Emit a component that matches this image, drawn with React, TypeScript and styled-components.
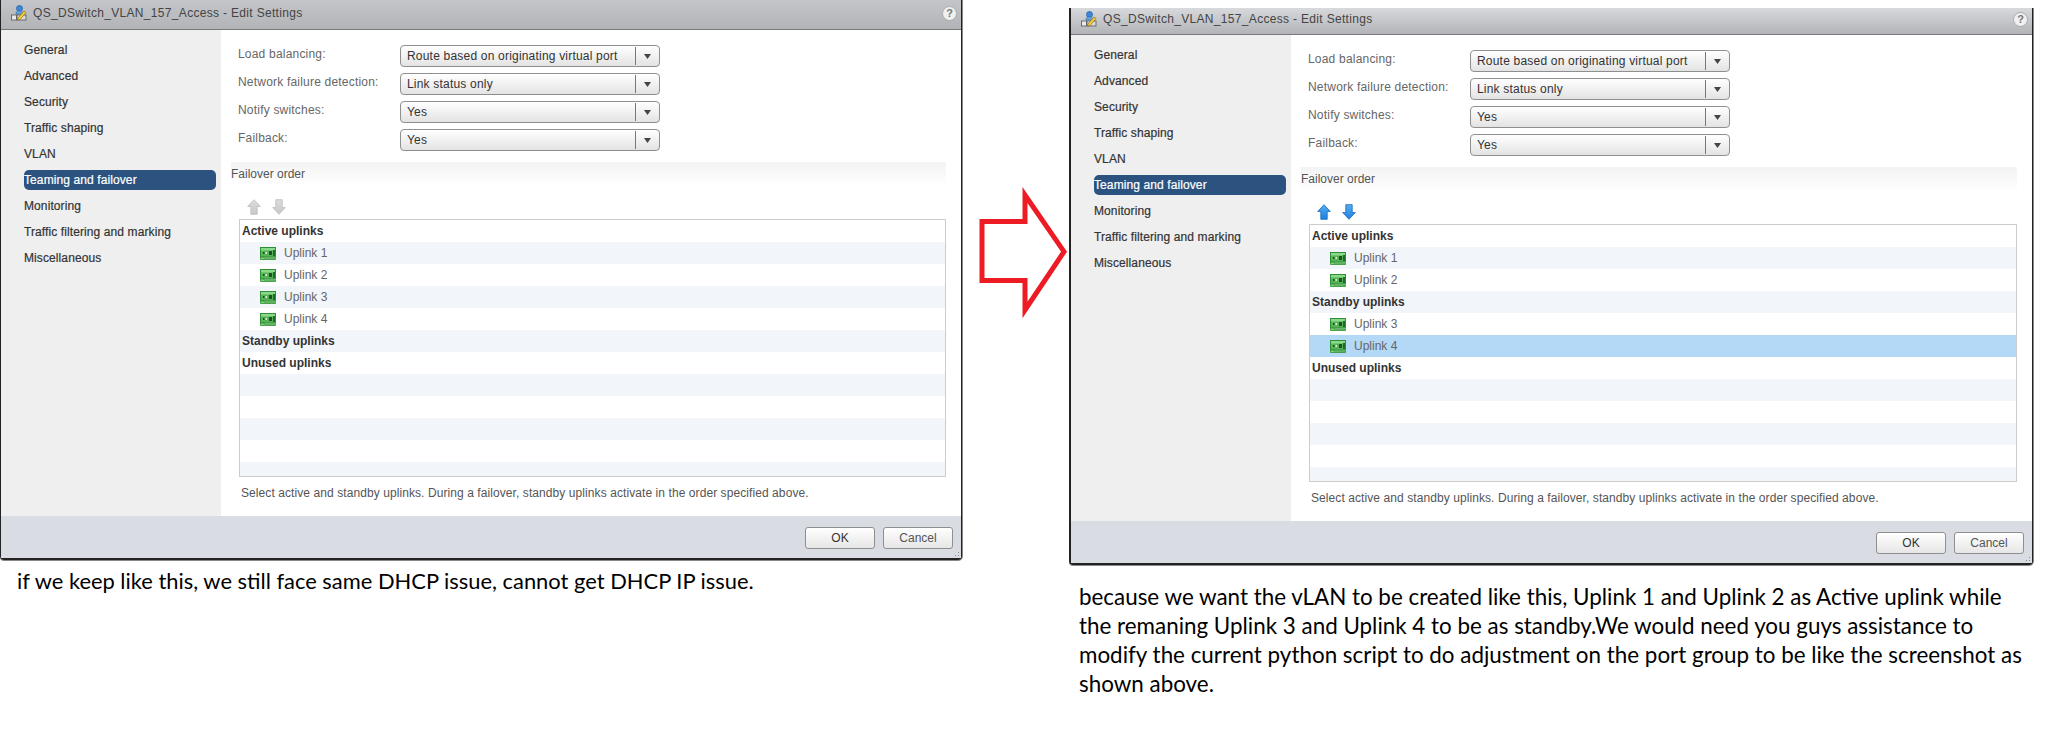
import styled, { createGlobalStyle } from 'styled-components';

type RowData = { label: string; kind: 'group' | 'uplink'; selected?: boolean };

const navItems = [
    'General',
    'Advanced',
    'Security',
    'Traffic shaping',
    'VLAN',
    'Teaming and failover',
    'Monitoring',
    'Traffic filtering and marking',
    'Miscellaneous',
];

const formRows = [
    { label: 'Load balancing:', value: 'Route based on originating virtual port' },
    { label: 'Network failure detection:', value: 'Link status only' },
    { label: 'Notify switches:', value: 'Yes' },
    { label: 'Failback:', value: 'Yes' },
];

const beforeRows: RowData[] = [
    { label: 'Active uplinks', kind: 'group' },
    { label: 'Uplink 1', kind: 'uplink' },
    { label: 'Uplink 2', kind: 'uplink' },
    { label: 'Uplink 3', kind: 'uplink' },
    { label: 'Uplink 4', kind: 'uplink' },
    { label: 'Standby uplinks', kind: 'group' },
    { label: 'Unused uplinks', kind: 'group' },
];

const afterRows: RowData[] = [
    { label: 'Active uplinks', kind: 'group' },
    { label: 'Uplink 1', kind: 'uplink' },
    { label: 'Uplink 2', kind: 'uplink' },
    { label: 'Standby uplinks', kind: 'group' },
    { label: 'Uplink 3', kind: 'uplink' },
    { label: 'Uplink 4', kind: 'uplink', selected: true },
    { label: 'Unused uplinks', kind: 'group' },
];

const SwitchIcon = () => (
    <svg width="16" height="16" viewBox="0 0 16 16">
        <circle cx="8.500" cy="3.500" r="3" fill="#3f86d8" stroke="#1d5aa5" strokeWidth="0.7" />
        <path d="M5 8c0-1.500 1.500-2 3.500-2s3 .6 3 1.500V9H5z" fill="#6aa6e6" stroke="#2c68ad" strokeWidth="0.6" />
        <rect x="0.500" y="10" width="5" height="5" fill="#e8e8e8" stroke="#555" strokeWidth="0.8" />
        <rect x="6" y="10" width="9" height="5" fill="#d9d9d9" stroke="#555" strokeWidth="0.8" />
        <path d="M7 13l6-7 2 1.500-6 7-2.500.5z" fill="#f5d23c" stroke="#8a6d10" strokeWidth="0.7" />
    </svg>
);

const MoveArrow = ({ direction, enabled }: { direction: 'up' | 'down'; enabled: boolean }) => (
    <svg width="14" height="16" viewBox="0 0 14 16">
        <defs>
            <linearGradient id={`arrow-${enabled}`} x1="0" y1="0" x2="0" y2="1">
                <stop offset="0" stopColor={enabled ? '#55aef5' : '#dcdcdc'} />
                <stop offset="1" stopColor={enabled ? '#1f7fe0' : '#c8c8c8'} />
            </linearGradient>
        </defs>
        <path
            d={direction === 'up' ? 'M7 .7L13.300 7.500H10.200V15.300H3.800V7.500H.7z' : 'M3.800 .7H10.200V8.500H13.300L7 15.300 .7 8.500H3.800z'}
            fill={`url(#arrow-${enabled})`}
            stroke={enabled ? '#1668b8' : '#bdbdbd'}
            strokeWidth="0.8"
        />
    </svg>
);

const NicIcon = () => (
    <svg width="16" height="13" viewBox="0 0 16 13">
        <rect x="0.500" y="0.500" width="15" height="9.500" fill="#55b455" stroke="#2f8f35" />
        <rect x="1" y="1" width="14" height="2.500" fill="#8ad88a" />
        <rect x="9" y="4" width="3" height="4" fill="#1f4f24" />
        <rect x="3" y="5" width="1.500" height="2" fill="#1f4f24" />
        <rect x="5.500" y="5" width="1.500" height="2" fill="#d9efd0" />
        <rect x="13" y="3" width="2" height="6" fill="#1f6a2a" />
        <path d="M.5 10v2.500h15V11H4V10z" fill="#7ed36f" stroke="#2f8f35" strokeWidth="0.8" />
    </svg>
);

const Caret = () => (
    <svg width="7" height="5" viewBox="0 0 7 5">
        <path d="M0 0h7L3.500 5z" fill="#444" />
    </svg>
);

const Dialog = ({ cropped, enabled, rows }: { cropped?: boolean; enabled: boolean; rows: RowData[] }) => (
    <Window $cropped={cropped}>
        <TitleBar $cropped={cropped}>
            <SwitchIcon />
            <TitleText>QS_DSwitch_VLAN_157_Access - Edit Settings</TitleText>
            <HelpButton>?</HelpButton>
        </TitleBar>
        <Body>
            <Sidebar>
                {navItems.map(item => (
                    <NavRow key={item}>
                        <NavLabel $active={item === 'Teaming and failover'}>{item}</NavLabel>
                    </NavRow>
                ))}
            </Sidebar>
            <Content>
                <Form>
                    {formRows.map(row => (
                        <FormRow key={row.label}>
                            <FormLabel>{row.label}</FormLabel>
                            <Select>
                                <SelectValue>{row.value}</SelectValue>
                                <SelectCaret>
                                    <Caret />
                                </SelectCaret>
                            </Select>
                        </FormRow>
                    ))}
                </Form>
                <SectionHeader>Failover order</SectionHeader>
                <Toolbar>
                    <MoveArrow direction="up" enabled={enabled} />
                    <MoveArrow direction="down" enabled={enabled} />
                </Toolbar>
                <List>
                    {Array.from({ length: 12 }).map((_, i) => {
                        const row = rows[i];
                        if (!row) return <ListRow key={i} />;
                        return (
                            <ListRow key={i} $selected={row.selected}>
                                {row.kind === 'group' ? (
                                    <GroupLabel>{row.label}</GroupLabel>
                                ) : (
                                    <UplinkLabel>
                                        <NicIcon />
                                        {row.label}
                                    </UplinkLabel>
                                )}
                            </ListRow>
                        );
                    })}
                </List>
                <HelpText>Select active and standby uplinks. During a failover, standby uplinks activate in the order specified above.</HelpText>
            </Content>
        </Body>
        <Footer>
            <FooterButton $strong>OK</FooterButton>
            <FooterButton>Cancel</FooterButton>
            <Grip />
        </Footer>
    </Window>
);

export default function App() {
    return (
        <>
            <GlobalStyle />
            <Page>
                <LeftColumn>
                    <Dialog cropped enabled={false} rows={beforeRows} />
                    <LeftCaption>if we keep like this, we still face same DHCP issue, cannot get DHCP IP issue.</LeftCaption>
                </LeftColumn>
                <RedArrow width="92" height="134" viewBox="0 0 92 134">
                    <path d="M3 36.500H46V10L85 66.700 46 125V95.500H3z" fill="#fff" stroke="#ed1c24" strokeWidth="5" />
                </RedArrow>
                <RightColumn>
                    <Dialog enabled rows={afterRows} />
                    <RightCaption>
                        because we want the vLAN to be created like this, Uplink 1 and Uplink 2 as Active uplink while
                        <br />
                        the remaning Uplink 3 and Uplink 4 to be as standby.We would need you guys assistance to
                        <br />
                        modify the current python script to do adjustment on the port group to be like the screenshot as
                        <br />
                        shown above.
                    </RightCaption>
                </RightColumn>
            </Page>
        </>
    );
}

const GlobalStyle = createGlobalStyle`
    html, body {
        margin: 0;
        padding: 0;
        background: #fff;
    }
`;

const Page = styled.div`
    display: flex;
    align-items: flex-start;
    width: 2072px;
    height: 754px;
    overflow: hidden;
    background: #fff;
    font-family: 'Liberation Sans', Arial, sans-serif;
    font-size: 12px;
`;

const LeftColumn = styled.div`
    width: 962px;
    flex: none;
`;

const RightColumn = styled.div`
    width: 964px;
    flex: none;
    margin-top: 8px;
`;

const RedArrow = styled.svg`
    flex: none;
    margin: 185px -2px 0 17px;
`;

const Window = styled.div<{ $cropped?: boolean }>`
    position: relative;
    display: flex;
    flex-direction: column;
    box-sizing: border-box;
    border: solid #222;
    border-width: ${p => (p.$cropped ? '0 1px 2px 1px' : '0 1px 2px 2px')};
    border-radius: 0 0 4px 4px;
    box-shadow: 0 1px 0 #888, 1px 0 0 #888;
`;

const TitleBar = styled.div<{ $cropped?: boolean }>`
    display: flex;
    align-items: center;
    box-sizing: border-box;
    height: ${p => (p.$cropped ? '30px' : '27px')};
    padding: ${p => (p.$cropped ? '0 4px 3px 10px' : '0 4px 4px 10px')};
    background: linear-gradient(${p => (p.$cropped ? '#c4c5c8' : '#d8d9dc')}, #b3b4b7);
    border-bottom: 1px solid #77797c;
`;

const TitleText = styled.div`
    flex: 1;
    margin-left: 6px;
    color: #444;
    font-size: 12px;
    letter-spacing: 0.32px;
`;

const HelpButton = styled.div`
    display: flex;
    align-items: center;
    justify-content: center;
    box-sizing: border-box;
    width: 15px;
    height: 15px;
    border: 1px solid #aaa;
    border-radius: 50%;
    background: #f0f0f0;
    color: #777;
    font-size: 11px;
    font-weight: bold;
`;

const Body = styled.div`
    display: flex;
    height: 486px;
    background: #fff;
`;

const Sidebar = styled.nav`
    flex: none;
    box-sizing: border-box;
    width: 220px;
    padding: 7px 5px 0 23px;
    background: #efefef;
`;

const NavRow = styled.div`
    display: flex;
    align-items: center;
    height: 26px;
`;

const NavLabel = styled.div<{ $active?: boolean }>`
    flex: 1;
    height: 20px;
    line-height: 20px;
    border-radius: 5px;
    color: ${p => (p.$active ? '#fff' : '#333')};
    background: ${p => (p.$active ? '#2c5380' : 'transparent')};
    font-size: 12px;
    letter-spacing: 0.1px;
    -webkit-text-stroke: 0.2px ${p => (p.$active ? '#fff' : '#333')};
`;

const Content = styled.div`
    flex: 1;
    min-width: 0;
    padding: 15px 15px 0 10px;
`;

const Form = styled.div`
    display: flex;
    flex-direction: column;
    gap: 6px;
    padding-left: 7px;
`;

const FormRow = styled.div`
    display: flex;
    align-items: flex-start;
`;

const FormLabel = styled.div`
    width: 162px;
    line-height: 18px;
    color: #666;
    letter-spacing: 0.2px;
`;

const Select = styled.div`
    display: flex;
    align-items: center;
    box-sizing: border-box;
    width: 260px;
    height: 22px;
    border: 1px solid #8f8f8f;
    border-radius: 4px;
    background: linear-gradient(#fff, #e3e3e3);
    color: #333;
`;

const SelectValue = styled.div`
    flex: 1;
    padding-left: 6px;
    letter-spacing: 0.2px;
`;

const SelectCaret = styled.div`
    display: flex;
    align-items: center;
    justify-content: center;
    width: 23px;
    height: 18px;
    border-left: 1px solid #777;
`;

const SectionHeader = styled.div`
    margin-top: 11px;
    height: 24px;
    line-height: 24px;
    background: linear-gradient(#f3f3f3, #fff);
    color: #555;
`;

const Toolbar = styled.div`
    display: flex;
    gap: 11px;
    padding: 13px 0 4px 16px;
    height: 16px;
`;

const List = styled.div`
    box-sizing: border-box;
    height: 258px;
    margin-left: 8px;
    border: 1px solid #ccc;
    overflow: hidden;
`;

const ListRow = styled.div<{ $selected?: boolean }>`
    height: 22px;
    background: #fff;
    &:nth-child(even) {
        background: #f2f5fa;
    }
    ${p => p.$selected && '&&, &&:nth-child(even) { background: #b3d9f7; }'}
`;

const GroupLabel = styled.div`
    padding-left: 2px;
    line-height: 22px;
    color: #333;
    font-weight: bold;
`;

const UplinkLabel = styled.div`
    display: flex;
    align-items: center;
    gap: 8px;
    height: 22px;
    padding-left: 20px;
    color: #666;
`;

const HelpText = styled.div`
    margin: 8px 0 0 10px;
    line-height: 16px;
    color: #555;
    font-size: 12px;
    letter-spacing: 0.08px;
`;

const Footer = styled.div`
    position: relative;
    display: flex;
    justify-content: flex-end;
    align-items: flex-start;
    gap: 8px;
    box-sizing: border-box;
    height: 42px;
    padding: 11px 8px 0 0;
    background: #d9dce2;
`;

const FooterButton = styled.div<{ $strong?: boolean }>`
    display: flex;
    align-items: center;
    justify-content: center;
    box-sizing: border-box;
    width: 70px;
    height: 22px;
    border: 1px solid #8f8f8f;
    border-radius: 3px;
    background: linear-gradient(#fff, #e6e6e6);
    color: ${p => (p.$strong ? '#333' : '#555')};
`;

const Grip = styled.div`
    position: absolute;
    right: 0;
    bottom: 0;
    width: 10px;
    height: 10px;
    background-image: radial-gradient(#888 0.7px, transparent 0.8px);
    background-size: 3px 3px;
    clip-path: polygon(100% 0, 100% 100%, 0 100%);
`;

const LeftCaption = styled.div`
    margin-top: 6px;
    padding-left: 17px;
    line-height: 29px;
    color: #000;
    font-family: Lato, 'Liberation Sans', sans-serif;
    font-size: 21.9px;
    white-space: nowrap;
`;

const RightCaption = styled.div`
    margin-top: 17px;
    padding-left: 10px;
    line-height: 29px;
    color: #000;
    font-family: Lato, 'Liberation Sans', sans-serif;
    font-size: 22.4px;
    white-space: nowrap;
`;
